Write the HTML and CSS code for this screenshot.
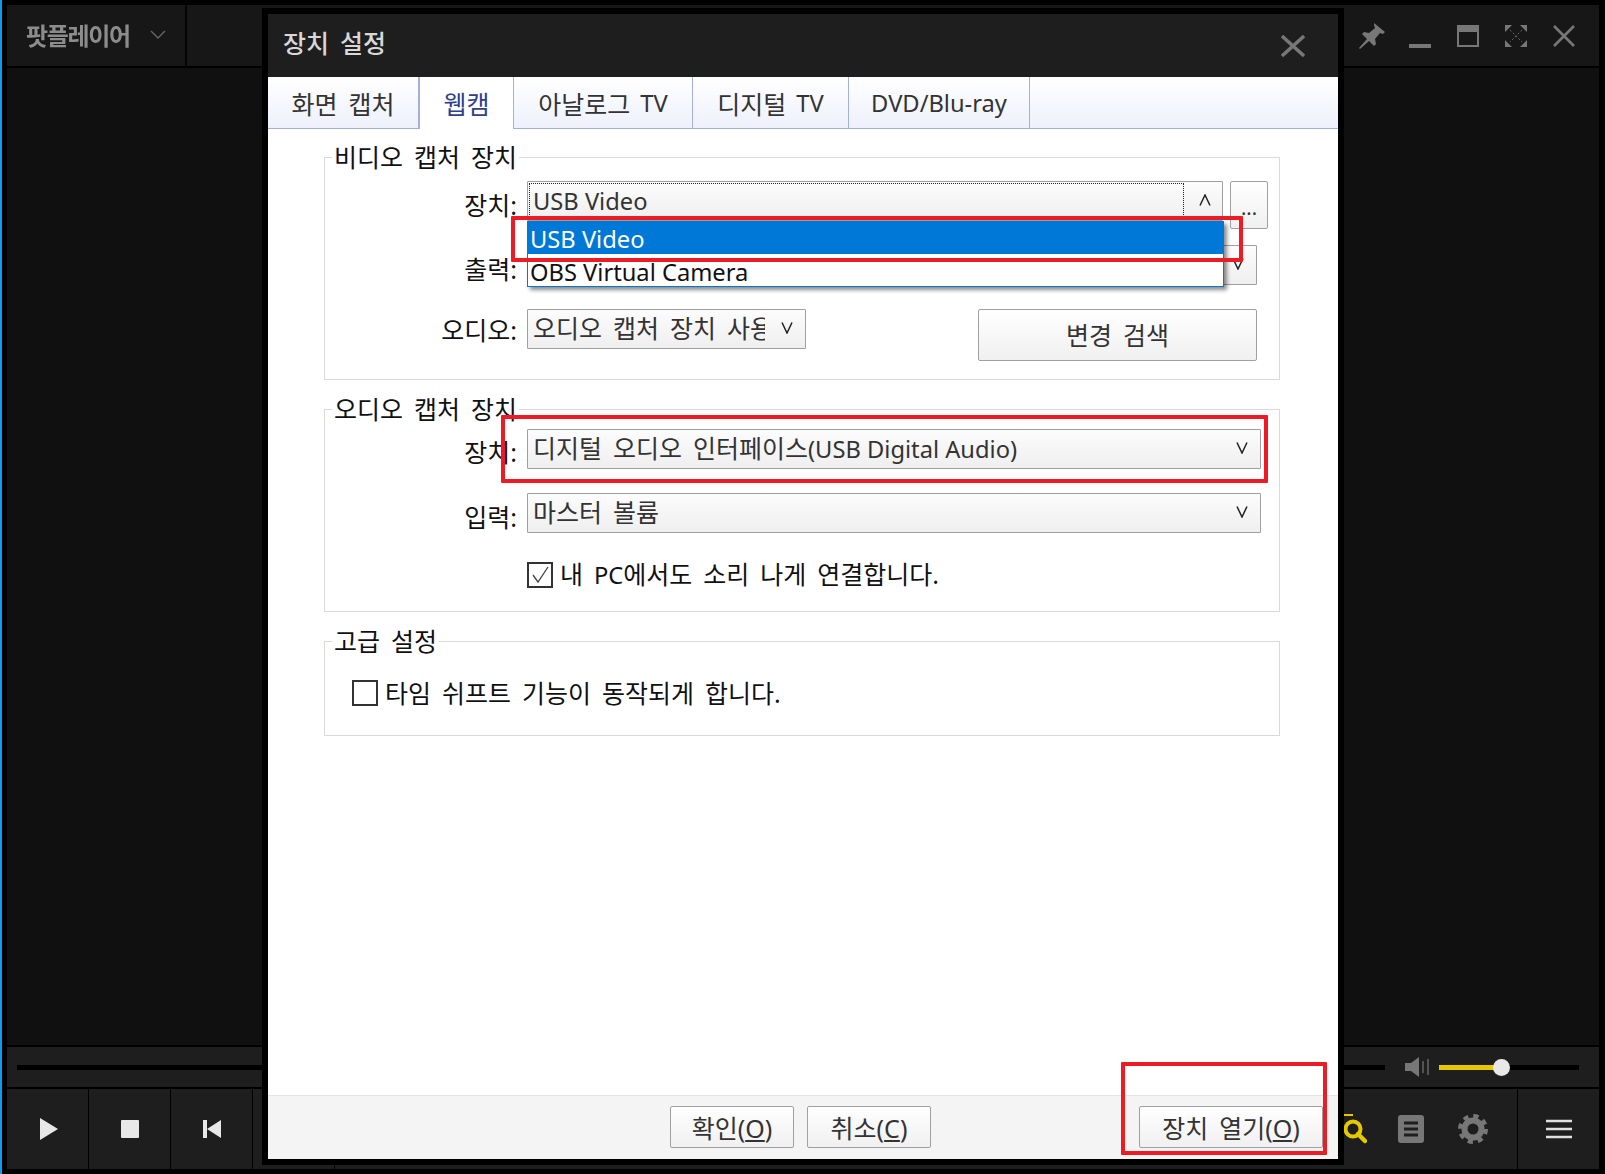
FILE: index.html
```html
<!DOCTYPE html>
<html lang="ko">
<head>
<meta charset="utf-8">
<title>장치 설정</title>
<link rel="stylesheet" href="styles.css">
</head>
<body>
<div class="edge"></div>
<div class="app">
  <header class="topbar">
    <div class="brand"><span class="brand-name">팟플레이어</span>
      <svg class="brand-chev" width="16" height="10" viewBox="0 0 16 10"><path d="M1 1l7 7 7-7" fill="none" stroke="#666" stroke-width="1.4"/></svg>
    </div>
    <div class="winbtns">
      <span class="winbtn"><svg width="26" height="26" viewBox="0 0 26 26"><path d="M15 0l11 9-2 2-3-1-5 6 1 5-2 2-5-5-9 8-1-1 8-9-5-5 2-2 5 1 6-5-1-3z" fill="#777"/></svg></span>
      <span class="winbtn"><svg width="22" height="24" viewBox="0 0 22 24"><rect y="20" width="22" height="4" fill="#777"/></svg></span>
      <span class="winbtn"><svg width="22" height="24" viewBox="0 0 22 24"><path d="M0 1h22v22H0z M2 8v13h18V8z" fill="#777" fill-rule="evenodd"/></svg></span>
      <span class="winbtn"><svg width="22" height="24" viewBox="0 0 22 24"><path d="M0 1h7L0 8zM22 1h-7l7 7zM0 23h7l-7-7zM22 23h-7l7-7z" fill="#777"/><path d="M5 6l12 12M17 6L5 18" stroke="#666" stroke-width="1" stroke-dasharray="2 2"/></svg></span>
      <span class="winbtn"><svg width="22" height="24" viewBox="0 0 22 24"><path d="M1 2l20 20M21 2L1 22" stroke="#777" stroke-width="2.6"/></svg></span>
    </div>
  </header>
  <main class="stage"></main>
  <div class="seekbar">
    <div class="track"></div>
    <svg class="speaker" width="24" height="20" viewBox="0 0 24 20"><path d="M0 6h6l8-6v20l-8-6H0z" fill="#777"/><path d="M18 4v12M23 2v16" stroke="#777" stroke-width="1.2"/></svg>
    <div class="volume"><div class="volume-fill"></div><div class="volume-knob"></div></div>
  </div>
  <div class="controls">
    <button class="ctl ctl-play"><svg width="18" height="22" viewBox="0 0 18 22"><path d="M0 0l18 11L0 22z" fill="#e8e8e8"/></svg></button>
    <button class="ctl"><svg width="18" height="18" viewBox="0 0 18 18"><rect width="18" height="18" rx="1" fill="#e8e8e8"/></svg></button>
    <button class="ctl"><svg width="18" height="18" viewBox="0 0 18 18"><path d="M0 0h4v18H0zM18 0v18L4 9z" fill="#e8e8e8"/></svg></button>
    <button class="ctl"></button>
    <div class="tools">
      <svg class="tool-search" width="24" height="30" viewBox="0 0 24 30"><path d="M0 1h10" stroke="#e6c800" stroke-width="2"/><circle cx="10" cy="15" r="7.5" fill="none" stroke="#e6c800" stroke-width="4"/><path d="M15 20l7 7" stroke="#e6c800" stroke-width="4.5" stroke-linecap="round"/></svg>
      <svg width="26" height="28" viewBox="0 0 26 28"><rect width="26" height="28" rx="3" fill="#777"/><path d="M6 8h14M6 14h14M6 20h14" stroke="#1e1e1e" stroke-width="3"/></svg>
      <svg width="30" height="30" viewBox="0 0 30 30"><circle cx="15" cy="15" r="8.5" fill="none" stroke="#777" stroke-width="6"/><circle cx="15" cy="15" r="13" fill="none" stroke="#777" stroke-width="4" stroke-dasharray="5.2 5"/></svg>
    </div>
    <button class="ctl"><svg width="26" height="20" viewBox="0 0 26 20"><path d="M0 2h26M0 10h26M0 18h26" stroke="#e0e0e0" stroke-width="2.4"/></svg></button>
  </div>
</div>

<section class="dialog">
  <div class="dialog-title"><span class="dialog-name">장치 설정</span>
    <svg width="24" height="22" viewBox="0 0 24 22"><path d="M1 1l22 20M23 1L1 21" stroke="#777" stroke-width="3.4"/></svg>
  </div>
  <nav class="tabs">
    <span class="tab tab-1">화면 캡처</span>
    <span class="tab tab-2 active">웹캠</span>
    <span class="tab tab-3">아날로그 <span class="la">TV</span></span>
    <span class="tab tab-4">디지털 <span class="la">TV</span></span>
    <span class="tab tab-5"><span class="la">DVD/Blu-ray</span></span>
  </nav>
  <div class="body">
    <section class="group group-video">
      <h3 class="legend">비디오 캡처 장치</h3>
      <div class="row">
        <label class="lbl lbl-low">장치:</label>
        <div class="combo combo-device"><span class="combo-text focus"><span class="la">USB Video</span></span><span class="arrow arrow-narrow"><svg width="12" height="12" viewBox="0 0 12 12"><path d="M1 11.5L6 1l5 10.5" fill="none" stroke="#222" stroke-width="1.5"/></svg></span></div>
        <button class="btn btn-more">...</button>
        <div class="droplist">
          <div class="opt selected"><span class="la">USB Video</span></div>
          <div class="opt"><span class="la">OBS Virtual Camera</span></div>
        </div>
      </div>
      <div class="row">
        <label class="lbl lbl-low">출력:</label>
        <div class="combo combo-output"><span class="combo-text"></span><span class="arrow"><svg width="12" height="12" viewBox="0 0 12 12"><path d="M1 .5L6 11l5-10.5" fill="none" stroke="#222" stroke-width="1.5"/></svg></span></div>
      </div>
      <div class="row">
        <label class="lbl lbl-high">오디오:</label>
        <div class="combo combo-audio"><span class="combo-text">오디오 캡처 장치 사용</span><span class="arrow"><svg width="12" height="12" viewBox="0 0 12 12"><path d="M1 .5L6 11l5-10.5" fill="none" stroke="#222" stroke-width="1.5"/></svg></span></div>
        <button class="btn btn-scan">변경 검색</button>
      </div>
    </section>

    <section class="group group-audio">
      <h3 class="legend">오디오 캡처 장치</h3>
      <div class="row">
        <label class="lbl">장치:</label>
        <div class="combo combo-wide"><span class="combo-text">디지털 오디오 인터페이스<span class="la">(USB Digital Audio)</span></span><span class="arrow"><svg width="12" height="12" viewBox="0 0 12 12"><path d="M1 .5L6 11l5-10.5" fill="none" stroke="#222" stroke-width="1.5"/></svg></span></div>
      </div>
      <div class="row">
        <label class="lbl lbl-low">입력:</label>
        <div class="combo combo-wide"><span class="combo-text">마스터 볼륨</span><span class="arrow"><svg width="12" height="12" viewBox="0 0 12 12"><path d="M1 .5L6 11l5-10.5" fill="none" stroke="#222" stroke-width="1.5"/></svg></span></div>
      </div>
      <div class="check check-indent"><span class="box"><svg width="22" height="22" viewBox="0 0 22 22"><path d="M4 11l5 7L19 3" fill="none" stroke="#444" stroke-width="1.3"/></svg></span><span>내 <span class="la">PC</span>에서도 소리 나게 연결합니다.</span></div>
    </section>

    <section class="group group-adv">
      <h3 class="legend">고급 설정</h3>
      <div class="check"><span class="box"></span><span>타임 쉬프트 기능이 동작되게 합니다.</span></div>
    </section>
  </div>
  <footer class="footer">
    <button class="btn btn-ok">확인<span class="la">(<u>O</u>)</span></button>
    <button class="btn btn-ok">취소<span class="la">(<u>C</u>)</span></button>
    <button class="btn btn-open">장치 열기<span class="la">(<u>O</u>)</span></button>
  </footer>
</section>

<div class="mark mark-1"></div>
<div class="mark mark-2"></div>
<div class="mark mark-3"></div>
</body>
</html>
```
FILE: styles.css
```css
* { box-sizing: border-box; }
html, body { height: 100%; }
body {
  margin: 0;
  background: #000;
  display: flex;
  font-family: "Noto Sans", "Noto Sans CJK KR", sans-serif;
  font-size: 25px;
  word-spacing: 4.5px;
  color: #111;
  overflow: hidden;
  position: relative;
}
button { font: inherit; word-spacing: inherit; }
.la { font-size: 23.7px; word-spacing: 0; }
.btn .la { font-size: 25px; }

.edge { width: 2px; background: #0a9cf0; flex: none; }
.app {
  flex: 1;
  margin: 5px 6px 5px 5px;
  display: flex;
  flex-direction: column;
  gap: 2px;
}
.topbar {
  height: 61px;
  background: #171717;
  display: flex;
  align-items: stretch;
  flex: none;
}
.brand {
  width: 180px;
  border-right: 2px solid #050505;
  display: flex;
  align-items: center;
  padding: 0 0 2px 19px;
  gap: 20px;
}
.brand-name { color: #8c8c8c; font-size: 24px; font-weight: 700; letter-spacing: -1.3px; filter: blur(.5px); }
.winbtns { margin-left: auto; display: flex; padding-right: 11px; }
.winbtn { width: 48px; display: flex; align-items: center; justify-content: center; }

.stage { flex: 1; background: #101010; }
.seekbar {
  height: 40px;
  flex: none;
  background: #1e1e1e;
  display: flex;
  align-items: center;
  padding: 0 20px 0 10px;
}
.track { flex: 1; height: 5px; background: #000; }
.speaker { margin: 0 10px 0 20px; flex: none; }
.volume { width: 140px; height: 5px; background: #000; position: relative; flex: none; }
.volume-fill { width: 55px; height: 100%; background: #e6c800; }
.volume-knob {
  position: absolute;
  left: 54px;
  top: -6px;
  width: 17px;
  height: 17px;
  border-radius: 50%;
  background: #e8e8e8;
}
.controls { height: 80px; flex: none; display: flex; background: #000; gap: 1px; }
.ctl {
  width: 81px;
  border: 0;
  padding: 0;
  background: #1e1e1e;
  display: flex;
  align-items: center;
  justify-content: center;
}
.ctl-play { padding-left: 3px; }
.tools {
  flex: 1;
  background: #1e1e1e;
  display: flex;
  align-items: center;
  justify-content: flex-end;
  gap: 34px;
  padding-right: 29px;
}
.tool-search { margin-right: -3px; }

.dialog {
  position: absolute;
  left: 262px;
  top: 8px;
  width: 1082px;
  height: 1157px;
  border: 6px solid #000;
  display: flex;
  flex-direction: column;
  background: #fff;
}
.dialog-title {
  height: 63px;
  flex: none;
  background: #1e1e1e;
  color: #d8d8d8;
  display: flex;
  align-items: center;
  justify-content: space-between;
  padding: 0 33px 0 15px;
  font-size: 25px;
}
.dialog-name { margin-bottom: 8px; font-weight: 500; }
.tabs {
  height: 52px;
  flex: none;
  display: flex;
  background: linear-gradient(#fff, #eef1fc);
  border-bottom: 1px solid #a3b1d8;
  color: #333;
}
.tab {
  height: 52px;
  display: flex;
  align-items: center;
  justify-content: center;
  gap: 10px;
  border-right: 1px solid #a3b1d8;
  white-space: nowrap;
}
.tab-1 { width: 151px; }
.tab-2 { width: 95px; }
.tab-3 { width: 179px; }
.tab-4 { width: 156px; }
.tab-5 { width: 181px; }
.tab.active { background: #fff; color: #2f3f8c; border-left: 1px solid #a3b1d8; }

.body {
  flex: 1;
  padding: 28px 58px 0 56px;
  display: flex;
  flex-direction: column;
  gap: 30px;
}
.group {
  border: 1px solid #d9d9d9;
  position: relative;
  display: flex;
  flex-direction: column;
  flex: none;
}
.legend {
  position: absolute;
  left: 7px;
  top: -19px;
  margin: 0;
  padding: 0 2px;
  background: #fff;
  font-size: 25px;
  font-weight: 400;
  line-height: 36px;
}
.group-video { height: 223px; padding-top: 23px; gap: 24px; }
.group-audio { height: 203px; padding-top: 19px; gap: 24px; margin-top: -1px; }
.group-adv { height: 95px; padding: 37px 0 0 27px; margin-top: -1px; }

.row { display: flex; align-items: flex-start; height: 40px; position: relative; }
.lbl { width: 192px; margin-right: 10px; text-align: right; line-height: 40px; padding-top: 3px; flex: none; }
.lbl-low { padding-top: 4px; }
.lbl-high { padding-top: 1px; }
.combo {
  height: 40px;
  display: flex;
  align-items: stretch;
  border: 1px solid #a0a0a0;
  background: linear-gradient(#fcfcfc, #efefef);
  color: #333;
  border-radius: 1px;
  line-height: 37px;
  flex: none;
}
.combo-text { flex: 1; padding-left: 5px; overflow: hidden; white-space: nowrap; }
.focus { outline: 1px dotted #222; outline-offset: -2px; }
.arrow { width: 40px; flex: none; display: flex; align-items: center; justify-content: center; padding: 0 0 2px 4px; }
.arrow-narrow { width: 37px; padding-left: 2px; }
.combo-device { width: 696px; }
.combo-output { width: 730px; }
.combo-audio { width: 279px; }
.combo-wide { width: 734px; }

.btn {
  border: 1px solid #a0a0a0;
  background: linear-gradient(#fff, #f0f0f0);
  color: #333;
  border-radius: 2px;
  padding: 0;
}
.btn-more { width: 38px; height: 48px; margin-left: 7px; line-height: 52px; font-size: 20px; }
.btn-scan { width: 279px; height: 52px; margin-left: 172px; flex: none; padding-bottom: 3px; }
.btn-ok { width: 124px; height: 42px; }
.btn-open { width: 184px; height: 42px; margin-left: auto; }

.droplist {
  position: absolute;
  left: 202px;
  top: 40px;
  width: 697px;
  height: 66px;
  border: 1px solid #0078d7;
  border-top: 0;
  background: #fff;
  box-shadow: 3px 3px 4px rgba(0, 0, 0, .45);
  z-index: 2;
}
.opt { height: 33px; line-height: 35px; padding-left: 2px; white-space: nowrap; }
.opt.selected { background: #0078d7; color: #fff; margin-left: -1px; margin-right: -1px; padding-left: 3px; }

.check { display: flex; align-items: center; gap: 7px; line-height: 28px; }
.check-indent { margin: 3px 0 0 202px; }
.box {
  width: 26px;
  height: 26px;
  border: 2px solid #333;
  background: #fff;
  display: block;
  flex: none;
}
.box svg { display: block; margin: 0; }

.footer {
  height: 64px;
  flex: none;
  background: #f4f4f4;
  border-top: 1px solid #e4e4e4;
  display: flex;
  align-items: flex-start;
  gap: 13px;
  padding: 10px 15px 0 402px;
}

.mark { position: absolute; border: 4px solid #ed1c24; z-index: 5; pointer-events: none; border-radius: 1px; }
.mark-1 { left: 511px; top: 216px; width: 732px; height: 46px; }
.mark-2 { left: 501px; top: 415px; width: 767px; height: 68px; }
.mark-3 { left: 1121px; top: 1062px; width: 206px; height: 93px; }
```
